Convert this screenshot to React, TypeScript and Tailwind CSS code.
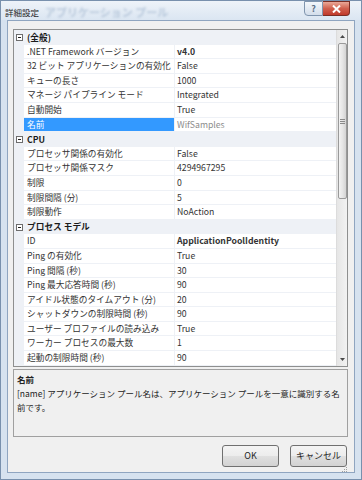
import React from 'react'

type Row =
  | { cat: string }
  | { label: string; value: string; bold?: boolean; selected?: boolean; dim?: boolean }

const rows: Row[] = [
  { cat: '(全般)' },
  { label: '.NET Framework バージョン', value: 'v4.0', bold: true },
  { label: '32 ビット アプリケーションの有効化', value: 'False' },
  { label: 'キューの長さ', value: '1000' },
  { label: 'マネージ パイプライン モード', value: 'Integrated' },
  { label: '自動開始', value: 'True' },
  { label: '名前', value: 'WifSamples', selected: true, dim: true },
  { cat: 'CPU' },
  { label: 'プロセッサ関係の有効化', value: 'False' },
  { label: 'プロセッサ関係マスク', value: '4294967295' },
  { label: '制限', value: '0' },
  { label: '制限間隔 (分)', value: '5' },
  { label: '制限動作', value: 'NoAction' },
  { cat: 'プロセス モデル' },
  { label: 'ID', value: 'ApplicationPoolIdentity', bold: true },
  { label: 'Ping の有効化', value: 'True' },
  { label: 'Ping 間隔 (秒)', value: '30' },
  { label: 'Ping 最大応答時間 (秒)', value: '90' },
  { label: 'アイドル状態のタイムアウト (分)', value: '20' },
  { label: 'シャットダウンの制限時間 (秒)', value: '90' },
  { label: 'ユーザー プロファイルの読み込み', value: 'True' },
  { label: 'ワーカー プロセスの最大数', value: '1' },
  { label: '起動の制限時間 (秒)', value: '90' },
]

function MinusBox() {
  return (
    <svg width="7" height="7" viewBox="0 0 7 7">
      <rect x="0.5" y="0.5" width="6" height="6" fill="#fff" stroke="#6d6d6d" />
      <line x1="2" y1="3.5" x2="5" y2="3.5" stroke="#222" />
    </svg>
  )
}

function Arrow({ down }: { down?: boolean }) {
  return (
    <svg width="5" height="3" viewBox="0 0 5 3">
      <path d={down ? 'M0 0H5L2.5 3Z' : 'M0 3H5L2.5 0Z'} fill="#4a4a4a" />
    </svg>
  )
}

function Scrollbar() {
  return (
    <div className="flex w-[11px] shrink-0 flex-col border-l border-[#dcdcdc] bg-gradient-to-r from-[#e6e6e6] to-[#f2f2f2]">
      <div className="flex h-[13px] items-center justify-center">
        <Arrow />
      </div>
      <div className="mx-[0.5px] flex h-[156px] items-center justify-center rounded-[2px] border border-[#9a9a9a] bg-gradient-to-r from-[#f3f3f3] via-[#e6e6e6] to-[#d4d4d4]">
        <div className="flex flex-col gap-[1px]">
          <div className="h-px w-[5px] bg-[#8a8a8a]" />
          <div className="h-px w-[5px] bg-[#8a8a8a]" />
          <div className="h-px w-[5px] bg-[#8a8a8a]" />
        </div>
      </div>
      <div className="flex-1" />
      <div className="flex h-[14px] items-center justify-center">
        <Arrow down />
      </div>
    </div>
  )
}

function GridRow({ row }: { row: Row }) {
  if ('cat' in row) {
    return (
      <div className="flex h-[14.6px] items-center bg-[#eef1f6]">
        <div className="flex w-[10px] shrink-0 justify-center">
          <MinusBox />
        </div>
        <div className="pl-[3px] font-bold text-[#1a1a1a]">{row.cat}</div>
      </div>
    )
  }
  return (
    <div className="flex h-[14.6px]">
      <div className="w-[10px] shrink-0 bg-[#eef1f6]" />
      <div
        className={`w-[151px] shrink-0 overflow-hidden whitespace-nowrap border-r border-b border-[#eef1f6] pl-[3px] leading-[13.6px] ${
          row.selected ? 'bg-[#3399ff] text-white' : 'bg-white text-[#333]'
        }`}
      >
        {row.label}
      </div>
      <div
        className={`flex-1 overflow-hidden whitespace-nowrap border-b border-[#eef1f6] bg-white pl-[2px] leading-[13.6px] ${
          row.bold ? 'font-bold text-[#111]' : ''
        } ${row.dim ? 'text-[#8c8c8c]' : 'text-[#333]'}`}
      >
        {row.value}
      </div>
    </div>
  )
}

export default function App() {
  return (
    <div className="flex h-[480px] w-[362px] flex-col overflow-hidden border border-[#7890ad] bg-[#d6e2ef] font-['Noto_Sans_CJK_JP',sans-serif] text-[8.7px]">
      {/* Title bar */}
      <div className="flex h-[19px] shrink-0 items-start bg-gradient-to-b from-[#eef3f9] to-[#dbe6f2]">
        <div className="flex items-center pt-[3px] pl-[4px]">
          <span className="text-[8.5px] text-[#1e1e1e]">詳細設定</span>
          <span className="ml-[6px] text-[11px] font-bold text-[#b9c9dc] blur-[1px]">アプリケーション プール</span>
        </div>
        <div className="ml-auto mr-[11px] flex">
          <div className="flex h-[15px] w-[19px] items-center justify-center rounded-bl-[4px] border border-[#8095ae] bg-gradient-to-b from-[#f4f7fb] to-[#d3deeb] text-[9px] font-bold text-[#5d6f86]">
            ?
          </div>
          <div className="flex h-[15px] w-[27px] items-center justify-center rounded-br-[4px] border border-l-0 border-[#7a2e25] bg-gradient-to-b from-[#e9a898] via-[#d0604e] to-[#c0392b]">
            <svg width="9" height="8" viewBox="0 0 9 8">
              <path d="M1 0.5L8 7.5M8 0.5L1 7.5" stroke="#fff" strokeWidth="2" />
            </svg>
          </div>
        </div>
      </div>

      {/* Client area */}
      <div className="mx-[6px] flex h-[453px] flex-col border border-[#8fa5c0] bg-[#f0f0f0] pt-[8px] pr-[6px] pl-[5px]">
        {/* Property grid */}
        <div className="flex h-[338px] shrink-0 overflow-hidden border border-[#8e8f8f] bg-white">
          <div className="flex-1 overflow-hidden">
            {rows.map((r, i) => (
              <GridRow key={i} row={r} />
            ))}
          </div>
          <Scrollbar />
        </div>

        {/* Description */}
        <div className="mt-[2px] h-[68px] shrink-0 border border-[#a0a0a0] bg-[#f0f0f0] px-[3px] pt-[2px] text-[8.5px] text-[#222]">
          <div className="leading-[14px] font-bold">名前</div>
          <div className="leading-[14px]">
            [name] アプリケーション プール名は、アプリケーション プールを一意に識別する名前です。
          </div>
        </div>

        {/* Buttons */}
        <div className="mt-[8px] flex justify-end gap-[11px] pr-[1px]">
          <button className="h-[22px] w-[57px] rounded-[3px] border border-[#707070] bg-[linear-gradient(to_bottom,#f4f4f4_0%,#ececec_50%,#e0e0e0_50%,#d2d2d2_100%)] text-[9px] text-[#1e1e1e]">
            OK
          </button>
          <button className="h-[22px] w-[57px] rounded-[3px] border border-[#707070] bg-[linear-gradient(to_bottom,#f4f4f4_0%,#ececec_50%,#e0e0e0_50%,#d2d2d2_100%)] text-[9px] text-[#1e1e1e]">
            キャンセル
          </button>
        </div>
        <div className="mt-auto mb-[1px] flex justify-end">
          <svg width="6" height="6" viewBox="0 0 6 6">
            <rect x="4" y="0" width="1" height="1" fill="#a0a0a0" />
            <rect x="2" y="2" width="1" height="1" fill="#a0a0a0" />
            <rect x="4" y="2" width="1" height="1" fill="#a0a0a0" />
            <rect x="0" y="4" width="1" height="1" fill="#a0a0a0" />
            <rect x="2" y="4" width="1" height="1" fill="#a0a0a0" />
            <rect x="4" y="4" width="1" height="1" fill="#a0a0a0" />
          </svg>
        </div>
      </div>
    </div>
  )
}
